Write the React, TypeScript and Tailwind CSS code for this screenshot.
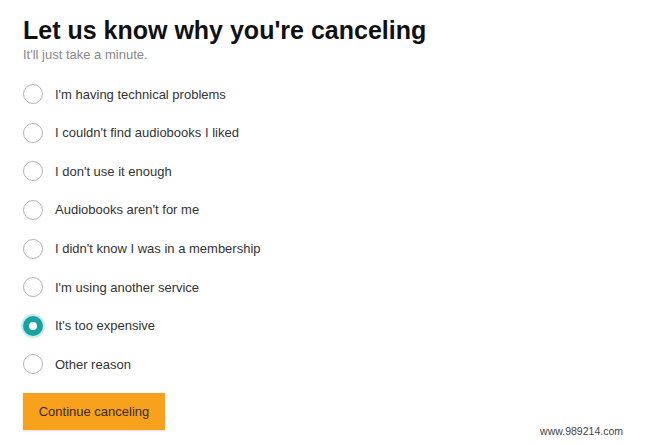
import { useState } from 'react';

const reasons = [
  "I'm having technical problems",
  "I couldn't find audiobooks I liked",
  "I don't use it enough",
  "Audiobooks aren't for me",
  "I didn't know I was in a membership",
  "I'm using another service",
  "It's too expensive",
  'Other reason',
];

export default function App() {
  const [selected, setSelected] = useState(6);

  return (
    <div
      className="relative w-[647px] h-[445px] bg-white overflow-hidden"
      style={{ fontFamily: '"Liberation Sans", Arial, sans-serif' }}
    >
      <div className="pl-[23px] pt-[14px]">
        <h1 className="text-[25px] leading-[32px] font-bold text-[#111]">
          Let us know why you're canceling
        </h1>
        <p className="text-[13px] leading-[15px] text-[#888] mt-[1px]">It'll just take a minute.</p>

        {/* Reason list */}
        <ul className="mt-[13px] flex flex-col">
          {reasons.map((r, i) => (
            <li key={r}>
              <label
                className="flex items-center h-[38.6px] cursor-pointer"
                onClick={() => setSelected(i)}
              >
                {selected === i ? (
                  <span className="w-[20px] h-[20px] rounded-full border-[6px] border-[#17a3a1] bg-white shadow-[0_0_0_2px_#c8ecea]" />
                ) : (
                  <span className="w-[20px] h-[20px] rounded-full border-[1.5px] border-[#b4b4b4] bg-white" />
                )}
                <span className="ml-[12px] text-[13px] text-[#333]">{r}</span>
              </label>
            </li>
          ))}
        </ul>

        <button className="mt-[9px] w-[142px] h-[37px] bg-[#f8a11d] text-[13px] text-[#3b2a12] shadow-[0_1px_2px_rgba(0,0,0,0.15)]">
          Continue canceling
        </button>
      </div>

      <span className="absolute right-[24px] bottom-[5px] text-[10.5px] text-[#444]">www.989214.com</span>
    </div>
  );
}
